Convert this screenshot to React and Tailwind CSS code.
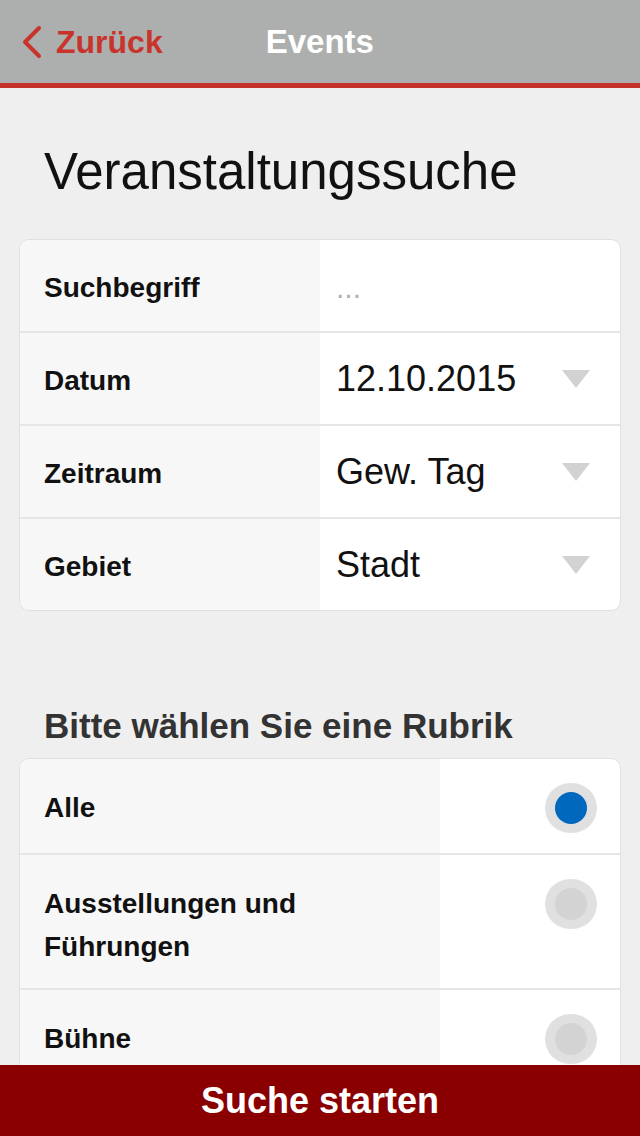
import { useState } from 'react';

const font = { fontFamily: '"Liberation Sans", Arial, sans-serif' };

function Chevron() {
  return (
    <svg width="24" height="34" viewBox="0 0 24 34" className="shrink-0">
      <path d="M19 3 L5 17 L19 31" fill="none" stroke="#c8342b" strokeWidth="4" strokeLinecap="round" strokeLinejoin="round" />
    </svg>
  );
}

function Caret() {
  return (
    <svg width="28" height="18" viewBox="0 0 28 18">
      <path d="M0 0 H28 L14 18 Z" fill="#d2d2d2" />
    </svg>
  );
}

function Radio({ checked }) {
  return (
    <div className="flex h-[50px] w-[52px] items-center justify-center rounded-full bg-[#e0e0e0]">
      <div className={checked ? 'h-[32px] w-[32px] rounded-full bg-[#0068bd]' : 'h-[32px] w-[32px] rounded-full bg-[#d3d3d3]'} />
    </div>
  );
}

const fields = [
  { label: 'Suchbegriff', value: '...', placeholder: true },
  { label: 'Datum', value: '12.10.2015' },
  { label: 'Zeitraum', value: 'Gew. Tag' },
  { label: 'Gebiet', value: 'Stadt' },
];

const rubriken = ['Alle', 'Ausstellungen und Führungen', 'Bühne'];

export default function App() {
  const [selected, setSelected] = useState(0);

  return (
    <div style={font} className="relative h-[1136px] w-[640px] overflow-hidden bg-[#efefef]">
      <header className="flex h-[88px] items-center border-b-[5px] border-[#c4302a] bg-[#adafae] pl-[20px]">
        <div className="flex items-center gap-[12px]">
          <Chevron />
          <span className="text-[32px] font-bold text-[#c8342b]">Zurück</span>
        </div>
        <span className="ml-[103px] text-[33px] font-bold text-white">Events</span>
      </header>

      <h1 className="px-[44px] pt-[52px] pb-[35px] text-[51px] leading-[64px] text-[#111]">Veranstaltungssuche</h1>

      <div className="mx-[19px] overflow-hidden rounded-[10px] border border-[#e0e0e0] bg-white">
        {fields.map((f, i) => (
          <div key={f.label} className={i > 0 ? 'flex h-[93px] border-t-2 border-[#e6e6e6]' : 'flex h-[91px]'}>
            <div className="flex w-[300px] items-center bg-[#f7f7f7] pt-[4px] pl-[24px] text-[28px] font-bold text-[#111]">
              {f.label}
            </div>
            <div className="flex flex-1 items-center justify-between pl-[16px] pr-[30px]">
              {f.placeholder ? (
                <span className="pt-[4px] text-[30px] text-[#b0b0b0]">...</span>
              ) : (
                <span className="text-[36px] text-[#111]">{f.value}</span>
              )}
              {!f.placeholder && <Caret />}
            </div>
          </div>
        ))}
      </div>

      <h2 className="px-[44px] pt-[92px] pb-[9px] text-[35px] leading-[46px] font-bold text-[#333]">Bitte wählen Sie eine Rubrik</h2>

      <div className="mx-[19px] overflow-hidden rounded-[10px] border border-[#e0e0e0] bg-white">
        {rubriken.map((r, i) => (
          <div
            key={r}
            onClick={() => setSelected(i)}
            className={i > 0 ? 'flex border-t-2 border-[#e6e6e6]' : 'flex'}
          >
            <div className="w-[420px] bg-[#f7f7f7] pt-[27px] pb-[20px] pl-[24px] pr-[40px] text-[28px] leading-[43px] font-bold text-[#111]">
              {r}
            </div>
            <div className="flex flex-1 justify-end pt-[24px] pr-[23px] pb-[20px]">
              <Radio checked={selected === i} />
            </div>
          </div>
        ))}
      </div>

      <button className="absolute bottom-0 left-0 flex h-[71px] w-full items-center justify-center bg-[#8a0000] text-[36px] font-bold text-white">
        Suche starten
      </button>
    </div>
  );
}
